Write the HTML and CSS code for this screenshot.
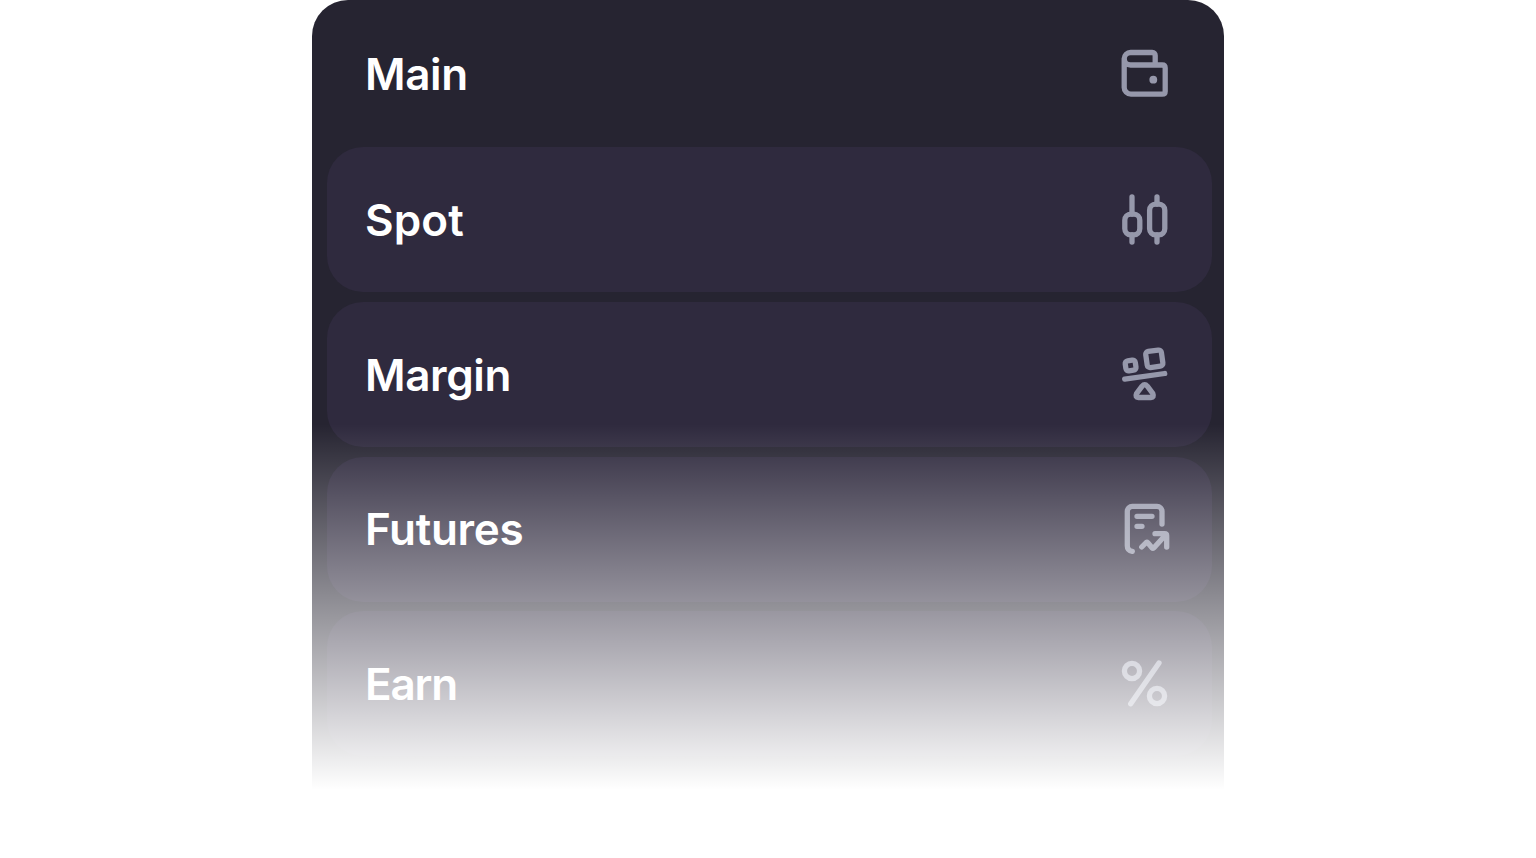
FILE: index.html
```html
<!DOCTYPE html>
<html lang="en">
<head>
  <meta charset="UTF-8">
  <meta name="viewport" content="width=device-width, initial-scale=1.0">
  <title>Accounts</title>
  <link rel="stylesheet" href="styles.css">
</head>
<body>
  <div class="panel">
    <div class="account main">
      <span class="name">Main</span>
      <svg class="icon" viewBox="0 0 60 60">
        <path d="M40.2 21V11.5q0-3-3-3H15.5a6.25 6.25 0 0 0 0 12.5H47.2q3 0 3 3V47.2q0 3-3 3H16a6.8 6.8 0 0 1-6.8-6.8V14.8"/>
        <circle class="dot" cx="38.3" cy="35.7" r="3.9"/>
      </svg>
    </div>
    <div class="account">
      <span class="name spot">Spot</span>
      <svg class="icon" viewBox="0 0 60 60">
        <path d="M17 7V24M17 45V52M42 7V14M42 45V52"/>
        <rect x="9.8" y="24.2" width="15" height="20.6" rx="6"/>
        <rect x="34.6" y="14.2" width="15.2" height="30.6" rx="6"/>
      </svg>
    </div>
    <div class="account">
      <span class="name">Margin</span>
      <svg class="icon" viewBox="0 0 60 60">
        <rect x="10.5" y="15.4" width="10.2" height="10.2" rx="2.8" transform="rotate(-8 15.6 20.5)"/>
        <rect x="31.4" y="5.7" width="15.8" height="16.2" rx="2.8" transform="rotate(-8 39.3 13.8)"/>
        <path d="M9.7 34.2L49.7 28.5"/>
        <path d="M27.1 41.2q2.6-3 5.2 0l5.6 7.5q1.5 3.6-2 3.8H23.5q-3.6-.2-2-3.8z"/>
      </svg>
    </div>
    <div class="account">
      <span class="name futures">Futures</span>
      <svg class="icon" viewBox="0 0 60 60">
        <path d="M17.3 52.3q-5-.8-5-5.6V12.3a5 5 0 0 1 5-5H42a5 5 0 0 1 5 5V25"/>
        <path d="M22 17.3H37M22 27.3H27"/>
        <path d="M26.7 48L31.2 43.5Q32 43 32.8 43.7L37 48.8Q38 49.8 39 48.7L50.5 36M40 34.7H49.7q2 0 2 2V48"/>
      </svg>
    </div>
    <div class="account">
      <span class="name earn">Earn</span>
      <svg class="icon" viewBox="0 0 60 60">
        <circle cx="17" cy="17" r="7.6"/>
        <circle cx="42" cy="42" r="7.6"/>
        <path d="M44 9L15.7 49.7"/>
      </svg>
    </div>
  </div>
</body>
</html>
```

FILE: styles.css
```css
* {
  box-sizing: border-box;
}

body {
  margin: 0;
  min-height: 100vh;
  background: #fff;
  font-family: Inter, "Liberation Sans", sans-serif;
}

.panel {
  position: relative;
  display: flex;
  flex-direction: column;
  gap: 9.7px;
  width: 912px;
  height: 790px;
  margin: 0 auto;
  padding: 0 12px 0 15px;
  border-radius: 36px 36px 0 0;
  background: #262431;
  overflow: hidden;
}

/* Fade to the page background */
.panel::after {
  content: "";
  position: absolute;
  left: 0;
  right: 0;
  top: 424px;
  bottom: 0;
  background: linear-gradient(to bottom, rgba(255, 255, 255, 0), #fff);
}

.account {
  display: flex;
  flex: none;
  align-items: center;
  justify-content: space-between;
  height: 145px;
  padding: 0 37px 0 38px;
  border-radius: 36px;
  background: #2f2a3e;
}

.main {
  height: 147.4px;
  margin-bottom: -9.7px;
  background: none;
}

.name {
  color: #fff;
  font-size: 44px;
  font-weight: 570;
  line-height: 60px;
  letter-spacing: -0.4px;
}

.spot {
  letter-spacing: 0.1px;
}

.futures {
  letter-spacing: -0.3px;
}

.earn {
  letter-spacing: -1.2px;
}

.icon {
  width: 60px;
  height: 60px;
  fill: none;
  stroke: #9698ab;
  stroke-width: 5.3;
  stroke-linecap: round;
  stroke-linejoin: round;
}

.dot {
  fill: #9698ab;
  stroke: none;
}
```
